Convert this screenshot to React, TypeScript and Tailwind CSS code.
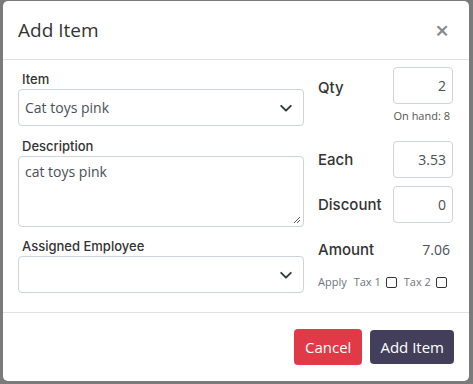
const font = { fontFamily: '"Open Sans", "Noto Sans", sans-serif' };
const labelFont = { fontFamily: 'Inter, "Open Sans", sans-serif' };

const Chevron = () => (
  <svg width="14" height="14" viewBox="0 0 16 16" className="text-[#343a40]">
    <path d="M2.5 5.5 8 11l5.5-5.5" fill="none" stroke="currentColor" strokeWidth="2.2" strokeLinecap="round" strokeLinejoin="round" />
  </svg>
);

const SelectBox = ({ value }: { value?: string }) => (
  <div className="flex h-[37px] items-center justify-between rounded-[4px] border border-[#ced4da] pl-[6px] pr-[10px] text-[14px] text-[#495057]">
    <span>{value}</span>
    <Chevron />
  </div>
);

const NumField = ({ value }: { value: string }) => (
  <div className="flex h-[37px] w-[60px] items-center justify-end rounded-[4px] border border-[#ced4da] pr-[6px] text-[14px] text-[#495057]">
    {value}
  </div>
);

const Label = ({ children, className = "" }: { children: string; className?: string }) => (
  <label className={`block pl-[4px] pt-[1px] text-[13px] font-medium leading-[20px] text-[#333] ${className}`} style={labelFont}>
    {children}
  </label>
);

const Box = () => <span className="inline-block h-[11px] w-[11px] rounded-[2px] border border-[#333]" />;

export default function App() {
  return (
    <div className="h-[384px] w-[473px] overflow-hidden bg-[#7b7b7b] pl-[3px] pt-[1px]" style={font}>
      <div className="flex h-[380px] w-[466px] flex-col rounded-[5px] bg-white">
        <div className="flex h-[59px] items-center justify-between border-b border-[#dee2e6] pl-[15px] pr-[20px]">
          <h1 className="text-[19px] text-[#333]">Add Item</h1>
          <span className="text-[24px] font-semibold leading-none text-[#888]">×</span>
        </div>
        <div className="flex h-[253px] border-b border-[#dee2e6] pl-[15px] pr-[16px]">
          <div className="w-[286px] pt-[8px]">
            <Label>Item</Label>
            <SelectBox value="Cat toys pink" />
            <Label className="mt-[9px]">Description</Label>
            <div className="relative h-[71px] rounded-[4px] border border-[#ced4da] px-[6px] pt-[4px] text-[14px] text-[#495057]">
              cat toys pink
              <svg width="8" height="8" viewBox="0 0 8 8" className="absolute bottom-[2px] right-[2px]">
                <path d="M7 1 1 7M7 4 4 7" stroke="#555" strokeWidth="1" />
              </svg>
            </div>
            <Label className="mt-[8px]">Assigned Employee</Label>
            <SelectBox />
          </div>
          <div className="ml-[14px] flex-1 pt-[7px] text-[#333]">
            <div className="flex items-center justify-between">
              <span className="pt-[6px] text-[15px] font-medium" style={labelFont}>Qty</span>
              <NumField value="2" />
            </div>
            <div className="mt-[4px] pr-[3px] text-right text-[11px] text-[#555]">On hand: 8</div>
            <div className="mt-[16px] flex items-center justify-between">
              <span className="pt-[3px] text-[15px] font-medium" style={labelFont}>Each</span>
              <NumField value="3.53" />
            </div>
            <div className="mt-[8px] flex items-center justify-between">
              <span className="pt-[3px] text-[15px] font-medium" style={labelFont}>Discount</span>
              <NumField value="0" />
            </div>
            <div className="mt-[15px] flex items-center justify-between pr-[3px]">
              <span className="pt-[1px] text-[15px] font-medium" style={labelFont}>Amount</span>
              <span className="text-[14px] text-[#495057]">7.06</span>
            </div>
            <div className="mt-[13px] flex items-center gap-[5px] text-[11px] text-[#6c757d]">
              <span className="mr-[2px]">Apply</span>
              <span>Tax 1</span>
              <Box />
              <span className="ml-[2px]">Tax 2</span>
              <Box />
            </div>
          </div>
        </div>
        <div className="flex flex-1 items-center justify-end gap-[8px] pr-[15px]">
          <button className="h-[36px] rounded-[4px] bg-[#e03a49] px-[11px] text-[15px] text-white">Cancel</button>
          <button className="h-[34px] rounded-[4px] bg-[#433f5a] px-[10px] text-[15px] text-white">Add Item</button>
        </div>
      </div>
    </div>
  );
}
